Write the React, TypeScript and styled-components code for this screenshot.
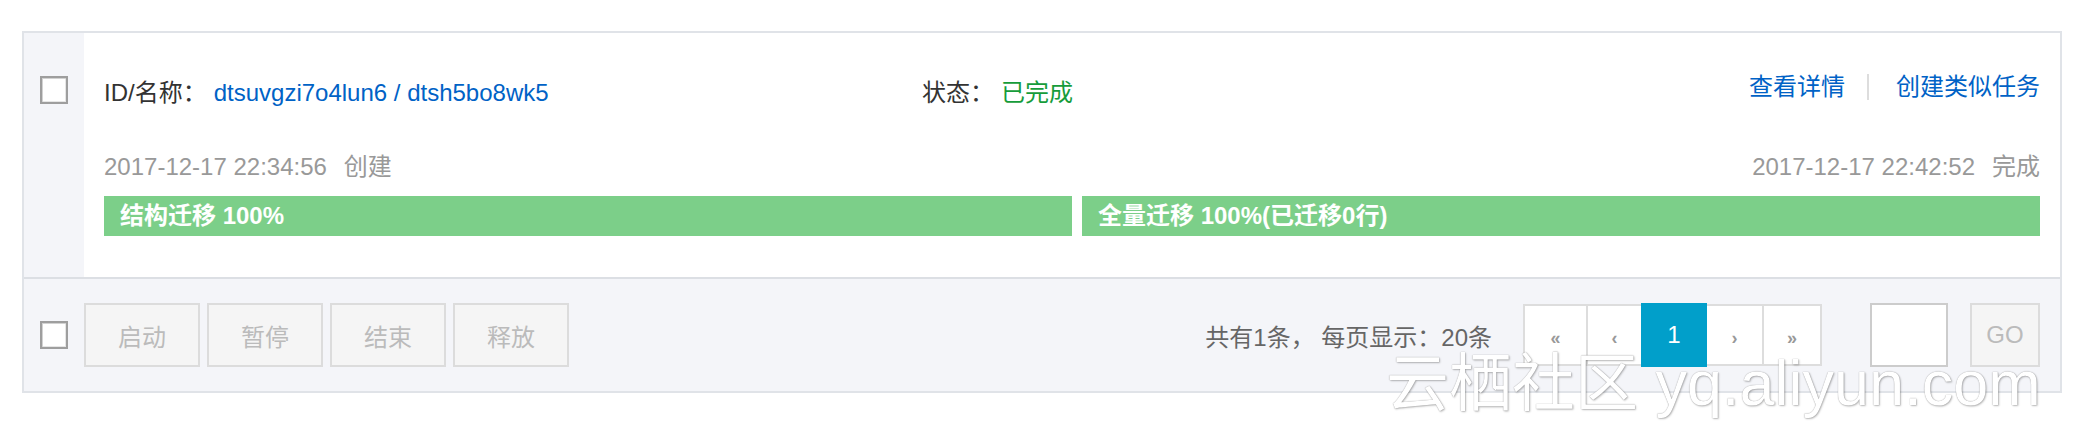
import React from "react";
import styled, { createGlobalStyle } from "styled-components";

const GlobalStyle = createGlobalStyle`
  html, body { margin: 0; padding: 0; background: #ffffff; }
  body { font-family: "Liberation Sans", "Noto Sans CJK SC", sans-serif; }
  * { box-sizing: border-box; }
`;

const Page = styled.div`
  position: relative;
  width: 2080px;
  height: 430px;
  padding: 31px 0 0 22px;
  overflow: hidden;
`;

const Card = styled.div`
  width: 2040px;
  border: 2px solid #e0e3e8;
`;

const TaskRow = styled.div`
  display: grid;
  grid-template-columns: 60px 1fr;
  border-bottom: 2px solid #dcdfe4;
`;

const SelectCell = styled.div`
  background: #f4f5f9;
  padding: 43px 0 0 16px;
`;

const Checkbox = styled.span`
  display: block;
  width: 28px;
  height: 28px;
  flex: none;
  border: 2px solid #9e9e9e;
  background: #ffffff;
  box-shadow: inset 1px 1px 0 #d2d2d2, inset -1px -1px 0 #e6e6e6;
`;

const TaskBody = styled.div`
  display: flex;
  flex-direction: column;
  padding: 42px 20px 41px 20px;
  font-size: 24px;
`;

const InfoRow = styled.div`
  display: grid;
  grid-template-columns: 818px 1fr auto;
  align-items: center;
  height: 36px;
  line-height: 36px;
`;

const Field = styled.div`
  display: flex;
  white-space: nowrap;
`;

const Label = styled.span`
  color: #333333;
`;

const Value = styled.span<{ $tone?: "link" | "ok" }>`
  margin-left: 7px;
  color: ${(p) => (p.$tone === "ok" ? "#169c3a" : "#0062c6")};
`;

const Actions = styled.div`
  display: flex;
  align-items: center;
  align-self: start;
  margin-top: -6px;
`;

const ActionLink = styled.a`
  color: #0062c6;
  text-decoration: none;
  cursor: pointer;
`;

const Divider = styled.span`
  width: 2px;
  height: 26px;
  background: #dddddd;
  margin: 0 27px 0 22px;
`;

const TimeRow = styled.div`
  display: flex;
  justify-content: space-between;
  margin-top: 38px;
  height: 36px;
  line-height: 36px;
  color: #999999;
`;

const TimeNote = styled.span`
  margin-left: 17px;
`;

const Bars = styled.div`
  display: flex;
  margin-top: 11px;
  height: 40px;
`;

const Bar = styled.div<{ $first?: boolean }>`
  flex: ${(p) => (p.$first ? "0 0 50%" : "1 1 auto")};
  margin-left: ${(p) => (p.$first ? "0" : "10px")};
  background: #7ccf89;
  color: #ffffff;
  font-weight: bold;
  line-height: 40px;
  padding-left: 16px;
  white-space: nowrap;
`;

const Footer = styled.div`
  display: flex;
  align-items: center;
  height: 112px;
  background: #f4f5f9;
  padding: 0 20px 0 16px;
  font-size: 24px;
`;

const ButtonGroup = styled.div`
  display: flex;
  gap: 7px;
  margin-left: 16px;
`;

const GhostButton = styled.button<{ $w?: number }>`
  width: ${(p) => p.$w ?? 116}px;
  height: 64px;
  border: 2px solid #dcdcdc;
  background: #f5f5f5;
  color: #bbbbbb;
  font-family: inherit;
  font-size: 24px;
  padding: 0;
  cursor: default;
`;

const Spacer = styled.div`
  flex: 1;
`;

const Total = styled.span`
  color: #666666;
  white-space: nowrap;
  margin-right: 31px;
`;

const Pager = styled.div`
  display: flex;
  align-items: center;
`;

const PageCell = styled.span<{ $w: number; $active?: boolean }>`
  display: flex;
  align-items: center;
  justify-content: center;
  width: ${(p) => p.$w}px;
  height: ${(p) => (p.$active ? 64 : 62)}px;
  margin-left: -2px;
  &:first-child { margin-left: 0; }
  border: 2px solid ${(p) => (p.$active ? "#019fca" : "#dddddd")};
  background: ${(p) => (p.$active ? "#019fca" : "#ffffff")};
  color: ${(p) => (p.$active ? "#ffffff" : "#999999")};
  font-size: ${(p) => (p.$active ? 24 : 18)}px;
  font-weight: ${(p) => (p.$active ? "normal" : "bold")};
  z-index: ${(p) => (p.$active ? 1 : 0)};
  padding-top: ${(p) => (p.$active ? 0 : 6)}px;
`;

const PageInput = styled.input`
  width: 78px;
  height: 64px;
  margin-left: 48px;
  border: 2px solid #cccccc;
  background: #ffffff;
  outline: none;
  padding: 0;
`;

const GoButton = styled(GhostButton)`
  margin-left: 22px;
`;

const Watermark = styled.div`
  position: absolute;
  left: 1386px;
  top: 352px;
  font-size: 63px;
  line-height: 1;
  color: #ffffff;
  white-space: nowrap;
  font-family: "Liberation Sans", "Noto Sans CJK SC", sans-serif;
  text-shadow: 0 0 1px rgba(0, 0, 0, 0.45), 1px 1px 2px rgba(0, 0, 0, 0.25);
  pointer-events: none;
`;

export default function App() {
  return (
    <>
      <GlobalStyle />
      <Page>
        <Card>
          <TaskRow>
            <SelectCell>
              <Checkbox />
            </SelectCell>
            <TaskBody>
              <InfoRow>
                <Field>
                  <Label>ID/名称：</Label>
                  <Value $tone="link">dtsuvgzi7o4lun6 / dtsh5bo8wk5</Value>
                </Field>
                <Field>
                  <Label>状态：</Label>
                  <Value $tone="ok">已完成</Value>
                </Field>
                <Actions>
                  <ActionLink>查看详情</ActionLink>
                  <Divider />
                  <ActionLink>创建类似任务</ActionLink>
                </Actions>
              </InfoRow>
              <TimeRow>
                <span>
                  2017-12-17 22:34:56<TimeNote>创建</TimeNote>
                </span>
                <span>
                  2017-12-17 22:42:52<TimeNote>完成</TimeNote>
                </span>
              </TimeRow>
              <Bars>
                <Bar $first>结构迁移 100%</Bar>
                <Bar>全量迁移 100%(已迁移0行)</Bar>
              </Bars>
            </TaskBody>
          </TaskRow>
          <Footer>
            <Checkbox />
            <ButtonGroup>
              <GhostButton>启动</GhostButton>
              <GhostButton>暂停</GhostButton>
              <GhostButton>结束</GhostButton>
              <GhostButton>释放</GhostButton>
            </ButtonGroup>
            <Spacer />
            <Total>共有1条， 每页显示：20条</Total>
            <Pager>
              <PageCell $w={65}>«</PageCell>
              <PageCell $w={57}>‹</PageCell>
              <PageCell $w={66} $active>1</PageCell>
              <PageCell $w={59}>›</PageCell>
              <PageCell $w={60}>»</PageCell>
            </Pager>
            <PageInput />
            <GoButton $w={70}>GO</GoButton>
          </Footer>
        </Card>
        <Watermark>云栖社区 yq.aliyun.com</Watermark>
      </Page>
    </>
  );
}
